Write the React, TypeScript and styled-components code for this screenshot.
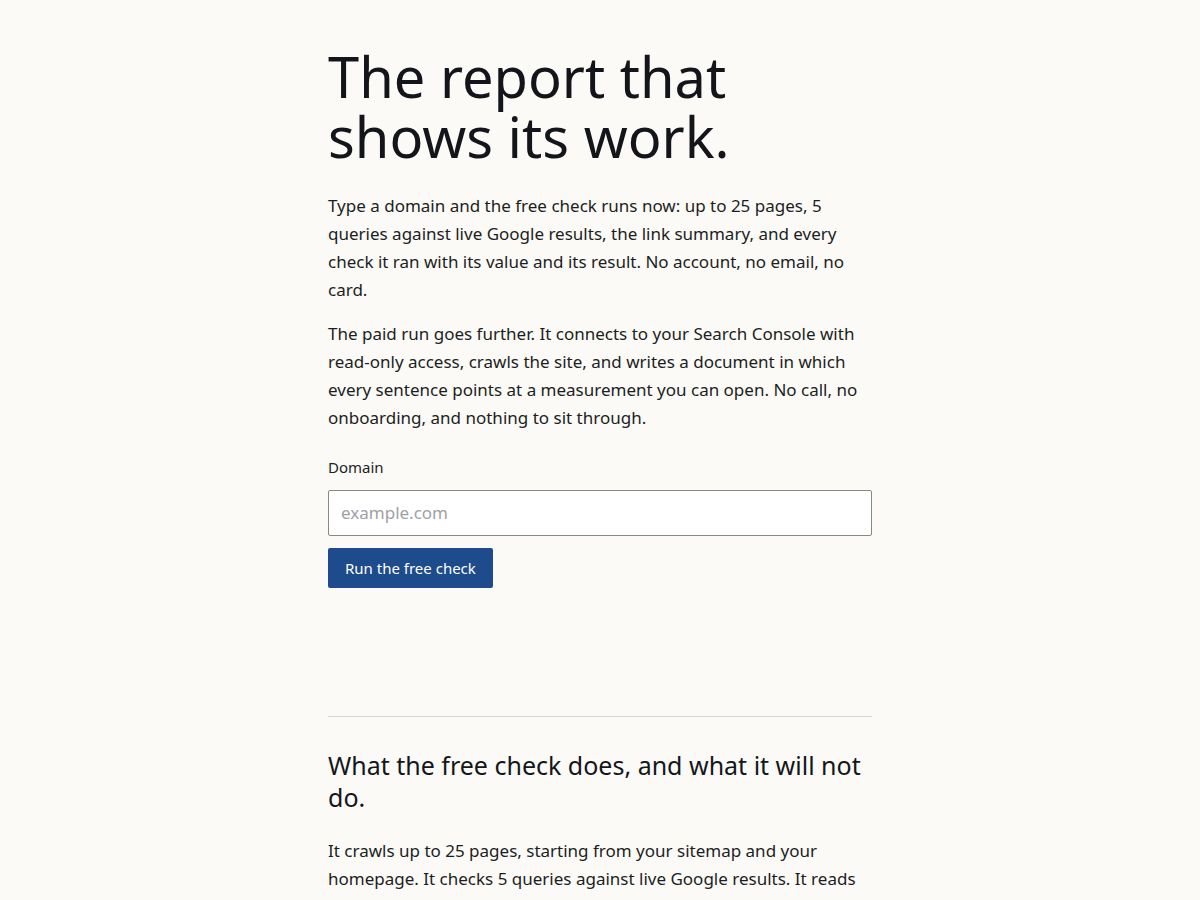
import React from "react";
import styled, { createGlobalStyle } from "styled-components";

const Global = createGlobalStyle`
  html, body { margin: 0; padding: 0; background: #fbfaf7; }
  body { font-family: "Noto Sans", "Open Sans", sans-serif; color: #15171b; }
  * { box-sizing: border-box; }
`;

const Main = styled.main`
  width: 544px;
  margin: 0 auto;
  padding-top: 46px;
`;

const Hero = styled.section`
  display: flex;
  flex-direction: column;
`;

const Title = styled.h1`
  margin: 0 0 26px;
  font-size: 56px;
  line-height: 60px;
  font-weight: 400;
  letter-spacing: 0;
  color: #13151a;
`;

const Para = styled.p`
  margin: 0 0 16px;
  font-size: 17px;
  line-height: 28px;
  color: #1c1e22;
`;

const Form = styled.form`
  display: flex;
  flex-direction: column;
  align-items: flex-start;
  margin-top: 8px;
`;

const Label = styled.label`
  font-size: 15px;
  line-height: 22px;
  color: #1c1e22;
  margin-bottom: 12px;
`;

const Input = styled.input`
  width: 100%;
  height: 46px;
  padding: 0 12px 2px;
  border: 1px solid #8a8880;
  border-radius: 2px;
  background: #ffffff;
  font-family: inherit;
  font-size: 17px;
  color: #1c1e22;
  outline: none;
  &::placeholder { color: #9ea1a6; }
`;

const Button = styled.button`
  margin-top: 12px;
  height: 40px;
  padding: 0 17px;
  border: none;
  border-radius: 2px;
  background: #1d4b8b;
  color: #ffffff;
  font-family: inherit;
  font-size: 15px;
  cursor: pointer;
`;

const Rule = styled.hr`
  margin: 128px 0 0;
  border: none;
  border-top: 1px solid #d9d7d1;
`;

const Section = styled.section`
  padding-top: 32px;
`;

const SubTitle = styled.h2`
  margin: 0 0 24px;
  font-size: 25px;
  line-height: 32px;
  font-weight: 400;
  color: #14161a;
`;

export default function App() {
  return (
    <>
      <Global />
      <Main>
        <Hero>
          <Title>The report that shows its work.</Title>
          <Para>
            Type a domain and the free check runs now: up to 25 pages, 5 queries against live Google
            results, the link summary, and every check it ran with its value and its result. No
            account, no email, no card.
          </Para>
          <Para>
            The paid run goes further. It connects to your Search Console with read-only access,
            crawls the site, and writes a document in which every sentence points at a measurement
            you can open. No call, no onboarding, and nothing to sit through.
          </Para>
          <Form onSubmit={(e) => e.preventDefault()}>
            <Label htmlFor="domain">Domain</Label>
            <Input id="domain" type="text" placeholder="example.com" />
            <Button type="submit">Run the free check</Button>
          </Form>
        </Hero>
        <Rule />
        <Section>
          <SubTitle>What the free check does, and what it will not do.</SubTitle>
          <Para>
            It crawls up to 25 pages, starting from your sitemap and your homepage. It checks 5
            queries against live Google results. It reads the link summary and lists every check it
            ran, with the value it measured and the result.
          </Para>
        </Section>
      </Main>
    </>
  );
}
